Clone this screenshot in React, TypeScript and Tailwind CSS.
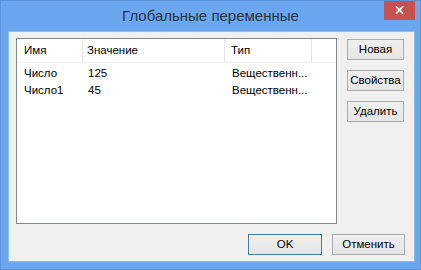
import React from "react";

const rows = [
  { name: "Число", value: "125", type: "Вещественн..." },
  { name: "Число1", value: "45", type: "Вещественн..." },
];

function Button({
  children,
  primary,
  className = "",
}: {
  children: React.ReactNode;
  primary?: boolean;
  className?: string;
}) {
  return (
    <div
      className={
        "flex items-center justify-center h-[21px] border bg-gradient-to-b from-[#f0f0f0] to-[#e5e5e5] text-[11.5px] text-black " +
        (primary ? "border-[#3c7fb1] " : "border-[#acacac] ") +
        className
      }
    >
      {children}
    </div>
  );
}

export default function App() {
  return (
    <div
      className="w-[421px] h-[270px] flex flex-col bg-[#6aa7ef] border border-[#5a93d8] overflow-hidden"
      style={{ fontFamily: '"Liberation Sans", Arial, sans-serif' }}
    >
      {/* title bar */}
      <div className="h-[30px] flex items-start shrink-0">
        <div className="flex-1 pt-[5px] pl-[36px] text-center text-[15px] leading-[20px] text-[#26323f]">
          Глобальные переменные
        </div>
        <div className="w-[31px] h-[20px] mr-[5px] -mt-px bg-[#c75050] flex items-center justify-center">
          <svg width="9" height="8" viewBox="0 0 9 8" fill="none" stroke="white" strokeWidth="1.7">
            <path d="M1 0.5 L8 7.5 M8 0.5 L1 7.5" />
          </svg>
        </div>
      </div>

      {/* client area */}
      <div className="flex-1 ml-[7px] mr-[5px] mb-[7px] bg-[#f0f0f0] border border-[#8fbdf2] flex flex-col pt-[6px] pl-[7px] pr-[9px] pb-[6px]">
        <div className="flex">
          <div className="w-[321px] h-[186px] bg-white border border-[#828790] flex flex-col text-[11.5px] text-black">
            <div className="flex h-[24px] border-b border-[#f0f0f0] shrink-0">
              <div className="w-[66px] pl-[7px] flex items-center border-r border-[#e5e5e5]">Имя</div>
              <div className="w-[142px] pl-[4px] flex items-center border-r border-[#e5e5e5]">Значение</div>
              <div className="w-[87px] pl-[6px] flex items-center border-r border-[#e5e5e5]">Тип</div>
              <div className="flex-1" />
            </div>
            <div className="pt-[2px]">
              {rows.map((r) => (
                <div key={r.name} className="flex h-[17px] items-center">
                  <div className="w-[66px] pl-[7px]">{r.name}</div>
                  <div className="w-[142px] pl-[5px]">{r.value}</div>
                  <div className="w-[87px] pl-[7px] whitespace-nowrap">{r.type}</div>
                </div>
              ))}
            </div>
          </div>
          <div className="ml-[10px] w-[57px] flex flex-col gap-[10px] pt-[1px]">
            <Button>Новая</Button>
            <Button>Свойства</Button>
            <Button>Удалить</Button>
          </div>
        </div>
        <div className="flex justify-end gap-[10px] mt-[10px]">
          <Button primary className="w-[74px]">
            OK
          </Button>
          <Button className="w-[73px]">Отменить</Button>
        </div>
      </div>
    </div>
  );
}
